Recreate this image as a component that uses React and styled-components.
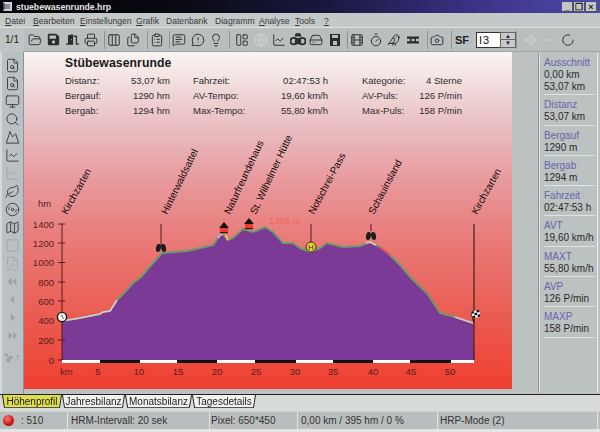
import React from "react";
import styled, { createGlobalStyle } from "styled-components";
import {
  FolderOpen, Printer, Columns3, Files, ClipboardList, MessageSquareText, MessageCircleWarning,
  Lightbulb, LayoutPanelLeft, Globe, ChartLine, HardDrive, Film, Timer, Bird, Camera,
  FileSearch, Monitor, Search, Mountain, Leaf, Disc3, Map, Square, FilePen, Sparkle, Minus, LoaderCircle,
} from "lucide-react";
import { FaSave, FaDoorOpen } from "react-icons/fa";

const GlobalStyle = createGlobalStyle`
  html, body { margin: 0; padding: 0; background: #bcc1c2; }
  * { box-sizing: border-box; }
`;

const Window = styled.div`
  width: 600px;
  height: 432px;
  display: flex;
  flex-direction: column;
  overflow: hidden;
  font-family: "Liberation Sans", Arial, sans-serif;
  background: #bcc1c2;
  color: #2a2a2a;
  filter: blur(0.3px);
`;

const TitleBar = styled.div`
  height: 13px;
  flex: none;
  display: flex;
  align-items: center;
  padding: 0 3px;
  background: linear-gradient(90deg, #000 0%, #0a0a14 30%, #1a1840 55%, #3c3488 80%, #4c4aa6 100%);
`;

const AppIcon = styled.div`
  width: 9px;
  height: 9px;
  margin-right: 4px;
  background: #8c8c9c;
  border: 2px solid #d0d0d8;
  border-left-color: #50506a;
`;

const TitleText = styled.span`
  color: #e8e8ea;
  font-size: 8.7px;
  font-weight: bold;
  flex: 1;
`;

const WinButton = styled.div`
  width: 11px;
  height: 10px;
  margin-left: 1px;
  background: #c2c6c4;
  color: #222;
  font-size: 9px;
  font-weight: bold;
  line-height: 10px;
  text-align: center;
  border-right: 1px solid #555;
  border-bottom: 1px solid #555;
`;

const MenuBar = styled.div`
  height: 15px;
  flex: none;
  display: flex;
  align-items: center;
  padding-top: 1px;
  background: #c3c8c8;
  border-bottom: 1px solid #dfe2e2;
  font-size: 8.6px;
  color: #3a3a3a;
`;

const MenuItem = styled.span`
  width: ${(p) => p.$w}px;
  flex: none;
  padding-left: 5px;
  white-space: nowrap;
  u { text-underline-offset: 1px; }
`;

const Toolbar = styled.div`
  height: 24px;
  flex: none;
  display: flex;
  align-items: center;
  background: #b9bebf;
  border-bottom: 1px solid #9ea3a4;
`;

const PageCell = styled.div`
  width: 24px;
  height: 24px;
  flex: none;
  font-size: 10px;
  line-height: 24px;
  text-align: center;
  color: #222;
  background: #bfc4c4;
`;

const ToolGroup = styled.div`
  width: ${(p) => p.$w}px;
  height: 18px;
  flex: none;
  display: flex;
  align-items: center;
  padding-left: ${(p) => p.$pad || 0}px;
  border-right: ${(p) => (p.$end ? "none" : "1px solid #8f9495")};
`;

const ToolButton = styled.div`
  width: 18.5px;
  height: 18px;
  flex: none;
  display: flex;
  align-items: center;
  justify-content: center;
  color: ${(p) => (p.$dim ? "#d2d6d6" : "#2c2c2c")};
`;

const SfLabel = styled.span`
  font-size: 11px;
  font-weight: bold;
  color: #222;
  width: 22px;
`;

const SpinInput = styled.div`
  width: 25px;
  height: 16px;
  background: #fff;
  border: 1px solid #333;
  border-right: none;
  font-size: 11px;
  line-height: 14px;
  padding-left: 2px;
  letter-spacing: 1px;
  color: #111;
`;

const SpinButtons = styled.div`
  width: 17px;
  height: 16px;
  display: flex;
  flex-direction: column;
  border: 1px solid #666;
`;

const SpinArrow = styled.div`
  flex: 1;
  display: flex;
  align-items: center;
  justify-content: center;
  background: #c6caca;
  font-size: 6px;
  color: #222;
  &:first-child { border-bottom: 1px solid #666; }
`;

const Main = styled.div`
  height: 342px;
  flex: none;
  display: flex;
`;

const SideBar = styled.div`
  width: 24px;
  flex: none;
  display: flex;
  flex-direction: column;
  align-items: center;
  padding: 4px 1px 0 0;
  background: #b9c1c4;
  border-left: 2px solid #d4d8d8;
  border-right: 1px solid #8e9496;
`;

const SideButton = styled.div`
  height: 18px;
  flex: none;
  display: flex;
  align-items: center;
  justify-content: center;
  color: ${(p) => (p.$dim ? "#9aa3a6" : "#333")};
  margin-top: ${(p) => p.$top || 0}px;
  font-size: 8px;
  font-weight: bold;
`;

const Canvas = styled.div`
  width: 488px;
  height: 337px;
  flex: none;
  display: flex;
  flex-direction: column;
  background: linear-gradient(180deg, #fbf6f4 0%, #f0d9d9 11%, #e9bcc0 23%, #e89a9e 38%, #e97a78 56%, #ea6259 74%, #ee3f30 100%);
`;

const Header = styled.div`
  height: 68px;
  flex: none;
  padding: 4px 0 0 41px;
`;

const TourTitle = styled.div`
  font-size: 12.2px;
  font-weight: bold;
  letter-spacing: 0.1px;
  line-height: 15px;
  color: #1a1a1a;
  margin-bottom: 1.5px;
`;

const StatGrid = styled.div`
  display: grid;
  grid-template-columns: 105px 158px 134px;
  font-size: 9.5px;
  line-height: 15px;
  color: #2c2c2c;
  white-space: nowrap;
`;

const Stat = styled.div`
  display: flex;
  justify-content: space-between;
  margin-left: ${(p) => p.$shift || 0}px;
`;

const Chart = styled.svg`
  display: block;
  flex: none;
  font-family: "Liberation Sans", Arial, sans-serif;
`;

const Gutter = styled.div`
  width: 27px;
  flex: none;
`;

const Panel = styled.div`
  width: 59px;
  height: 340px;
  flex: none;
  margin-top: 1px;
  padding: 0 2px 0 4px;
  border-left: 1px solid #dfe3e3;
  border-right: 1px solid #eceeee;
  box-shadow: -1px 0 0 #8f9495;
`;

const PanelItem = styled.div`
  padding: 4px 0 1.3px;
  border-bottom: 1px solid #dfe3e3;
  font-size: 10px;
  line-height: 12px;
  white-space: nowrap;
  color: #2a2a2a;
  span { display: block; color: #6666a8; }
`;

const TabStrip = styled.div`
  height: 17px;
  flex: none;
  display: flex;
  padding-left: 2px;
  background: #d7dad6;
  border-top: 1px solid #222;
`;

const Tab = styled.div`
  position: relative;
  width: ${(p) => p.$w}px;
  height: 14px;
  flex: none;
  font-size: 10px;
  line-height: 14px;
  text-align: center;
  color: #222;
  span { position: relative; }
  &::before {
    content: "";
    position: absolute;
    inset: 0;
    background: ${(p) => (p.$active ? "#dede4c" : "#f2f3f0")};
    border-left: 1px solid #222;
    border-right: 1px solid #222;
    border-bottom: 1px solid #555;
    transform-origin: top;
    transform: perspective(30px) rotateX(-9deg);
  }
`;

const StatusBar = styled.div`
  height: 18px;
  flex: none;
  display: flex;
  align-items: center;
  background: #babdbd;
  border-top: 1px solid #cfd2d2;
  font-size: 10px;
  color: #333;
  white-space: nowrap;
`;

const StatusPane = styled.div`
  width: ${(p) => p.$w}px;
  height: 100%;
  flex: none;
  display: flex;
  align-items: center;
  gap: 7px;
  padding-left: ${(p) => p.$pad || 2}px;
  border-right: 1px solid #e2e4e4;
`;

const Led = styled.div`
  width: 11px;
  height: 11px;
  border-radius: 50%;
  background: radial-gradient(circle at 40% 35%, #f08080, #d01818 55%, #801010);
`;

const BottomEdge = styled.div`
  flex: 1;
  background: #e2e5e2;
`;

const I = { size: 14, strokeWidth: 1.6 };
const S = { size: 15, strokeWidth: 1.4 };

const Shape = ({ children, size = 14 }) => (
  <svg width={size} height={size} viewBox="0 0 14 14" fill="currentColor">{children}</svg>
);

const menus = [
  ["D", "atei", 28], ["B", "earbeiten", 47], ["E", "instellungen", 56], ["G", "rafik", 30],
  ["", "Datenbank", 49], ["", "Diagramm", 44], ["A", "nalyse", 36], ["T", "ools", 29], ["?", "", 20],
];

const stats = [
  ["Distanz:", "53,07 km", "Fahrzeit:", "02:47:53 h", "Kategorie:", "4 Sterne"],
  ["Bergauf:", "1290 hm", "AV-Tempo:", "19,60 km/h", "AV-Puls:", "126 P/min"],
  ["Bergab:", "1294 hm", "Max-Tempo:", "55,80 km/h", "Max-Puls:", "158 P/min"],
];

const summary = [
  ["Distanz", "53,07 km"], ["Bergauf", "1290 m"], ["Bergab", "1294 m"], ["Fahrzeit", "02:47:53 h"],
  ["AVT", "19,60 km/h"], ["MAXT", "55,80 km/h"], ["AVP", "126 P/min"], ["MAXP", "158 P/min"],
];

const profile = [
  [62, 321], [80, 318], [100, 314], [103, 312], [110, 311], [117, 300], [125, 292], [133, 283], [141, 277],
  [153, 263], [162, 253], [187, 251], [213, 245], [220, 235], [225, 235], [228, 240], [233, 238], [243, 229],
  [253, 232], [265, 227], [273, 232], [283, 243], [293, 243], [300, 248], [310, 252], [320, 248], [327, 243],
  [343, 247], [360, 246], [370, 242], [380, 247], [390, 255], [400, 265], [413, 280], [427, 293], [440, 313],
  [455, 317], [473, 323],
];
const pts = (list) => list.map((p) => p.join(",")).join(" ");

const yTicks = [[1400, 224], [1200, 243], [1000, 262.5], [800, 282], [600, 301], [400, 320.5], [200, 340], [0, 360]];
const kmLabels = [[5, 98], [10, 139], [15, 178], [20, 217], [25, 256], [30, 295], [35, 333], [40, 373], [45, 411], [50, 450]];
const scale = [[62, 100, "#fff"], [100, 140, "#111"], [140, 177, "#fff"], [177, 217, "#111"], [217, 255, "#fff"], [255, 296, "#111"], [296, 333, "#fff"], [333, 373, "#111"], [373, 410, "#fff"], [410, 451, "#111"], [451, 474, "#fff"]];

const places = [
  ["Kirchzarten", 67, 215, 61], ["Hinterwaldsattel", 167, 215, 64], ["Naturfreundehaus", 230, 215, 65],
  ["St. Wilhelmer Hütte", 256, 215, 65], ["Notschrei-Pass", 314, 215, 62], ["Schauinsland", 374, 215, 62],
  ["Kirchzarten", 477, 215, 61],
];

const Binoculars = ({ x, y }) => (
  <g fill="#1c1c1c">
    <ellipse cx={x - 2.6} cy={y} rx="2.4" ry="4" transform={`rotate(12 ${x - 2.6} ${y})`} />
    <ellipse cx={x + 2.6} cy={y} rx="2.4" ry="4" transform={`rotate(-12 ${x + 2.6} ${y})`} />
  </g>
);

const Hut = ({ x, y }) => (
  <g>
    <path d={`M${x} ${y}l5 6h-10z`} fill="#1a1010" />
    <rect x={x - 4} y={y + 6} width="8" height="4" fill="#e8402c" />
    <rect x={x - 4} y={y + 10} width="8" height="1.2" fill="#401010" />
  </g>
);

const Profile = () => (
  <Chart width="488" height="269" viewBox="24 120 488 269">
    <polygon points={`62,360 ${pts(profile)} 474,360`} fill="#7b3a96" />
    <polyline points={pts(profile)} fill="none" stroke="#6f9a6a" strokeWidth="2" />
    <polyline points={pts(profile.slice(0, 6))} fill="none" stroke="#e4c8d0" strokeWidth="1.6" />
    <polyline points="218,238 220,235 222,234" fill="none" stroke="#c8a8e0" strokeWidth="2" />
    <polyline points="225,235 228,240" fill="none" stroke="#e8c850" strokeWidth="2" />
    <polyline points="366,243 370,242 376,245" fill="none" stroke="#e4c8d0" strokeWidth="1.6" />
    <polyline points="380,247 390,255" fill="none" stroke="#e0505c" strokeWidth="2" />
    <polyline points="455,317 473,323" fill="none" stroke="#e8c0d0" strokeWidth="1.6" />

    <line x1="62" y1="224" x2="62" y2="360" stroke="#5a1a1a" strokeWidth="1" />
    {yTicks.map(([v, y]) => (
      <g key={v}>
        <line x1="58" y1={y} x2="65" y2={y} stroke="#5a1a1a" strokeWidth="1" />
        <text x="54" y={y + 3.5} textAnchor="end" fontSize="9.5" fill="#5a1c1c">{v}</text>
      </g>
    ))}
    <text x="38" y="207" fontSize="9.5" fill="#5a1c1c">hm</text>
    <text x="60" y="375" fontSize="9.5" fill="#5a1c1c">km</text>
    {scale.map(([a, b, c]) => (
      <rect key={a} x={a} y="360" width={b - a} height="3" fill={c} />
    ))}
    {kmLabels.map(([v, x]) => (
      <text key={v} x={x} y="375" textAnchor="middle" fontSize="9.5" fill="#5a1c1c">{v}</text>
    ))}

    <line x1="161" y1="224" x2="161" y2="247" stroke="#4a2020" />
    <line x1="311" y1="224" x2="311" y2="243" stroke="#4a2020" />
    <line x1="371" y1="224" x2="371" y2="231" stroke="#4a2020" />
    <line x1="474" y1="224" x2="474" y2="360" stroke="#1a1010" />

    {places.map(([name, x, y, a], i) => (
      <text key={i} x={x} y={y} fontSize="10" fill="#140a0a" transform={`rotate(${-a} ${x} ${y})`}>{name}</text>
    ))}

    <Binoculars x={161} y={248} />
    <Binoculars x={371} y={236} />
    <Hut x={224} y={222} />
    <Hut x={249} y={218} />
    <text x="269" y="224" fontSize="9.5" fill="#ef6a58">1356 m</text>

    <circle cx="311" cy="247" r="5" fill="#e6d040" stroke="#3a3010" strokeWidth="1" />
    <text x="311" y="250" textAnchor="middle" fontSize="8" fill="#3a3010">H</text>

    <circle cx="62" cy="317" r="4.6" fill="#f4f4f4" stroke="#1a1a1a" strokeWidth="1.4" />
    <path d="M62 314.5v2.5l2 1.5" fill="none" stroke="#333" strokeWidth="0.8" />

    <g transform="rotate(-14 474 315)">
      <line x1="472" y1="312" x2="472" y2="322" stroke="#111" />
      <rect x="472" y="311" width="8" height="7" fill="#fff" />
      <path d="M472 311h2.7v2.3h-2.7zM477.3 311h2.7v2.3h-2.7zM474.7 313.3h2.7v2.3h-2.7zM472 315.7h2.7v2.3h-2.7zM477.3 315.7h2.7v2.3h-2.7z" fill="#111" />
    </g>
  </Chart>
);

export default function App() {
  return (
    <Window>
      <GlobalStyle />
      <TitleBar>
        <AppIcon />
        <TitleText>stuebewasenrunde.hrp</TitleText>
        <WinButton>_</WinButton>
        <WinButton>❐</WinButton>
        <WinButton>×</WinButton>
      </TitleBar>
      <MenuBar>
        {menus.map(([u, rest, w]) => (
          <MenuItem key={u + rest} $w={w}>{u && <u>{u}</u>}{rest}</MenuItem>
        ))}
      </MenuBar>
      <Toolbar>
        <PageCell>1/1</PageCell>
        <ToolGroup $w={81} $pad={2}>
          <ToolButton><FolderOpen {...I} /></ToolButton>
          <ToolButton><FaSave size={13} /></ToolButton>
          <ToolButton><FaDoorOpen size={13} /></ToolButton>
          <ToolButton><Printer {...I} /></ToolButton>
        </ToolGroup>
        <ToolGroup $w={43}>
          <ToolButton><Columns3 {...I} /></ToolButton>
          <ToolButton><Files {...I} /></ToolButton>
        </ToolGroup>
        <ToolGroup $w={22}>
          <ToolButton><ClipboardList {...I} /></ToolButton>
        </ToolGroup>
        <ToolGroup $w={60}>
          <ToolButton><MessageSquareText {...I} /></ToolButton>
          <ToolButton><MessageCircleWarning {...I} /></ToolButton>
          <ToolButton><Lightbulb {...I} /></ToolButton>
        </ToolGroup>
        <ToolGroup $w={118} $pad={3}>
          <ToolButton><LayoutPanelLeft {...I} /></ToolButton>
          <ToolButton $dim><Globe {...I} /></ToolButton>
          <ToolButton><ChartLine {...I} /></ToolButton>
          <ToolButton>
            <Shape size={16}>
              <path d="M5 1h4l1 3H4z" />
              <circle cx="3.2" cy="8" r="2.8" fill="none" stroke="currentColor" strokeWidth="1.6" />
              <circle cx="7" cy="8" r="2.8" />
              <circle cx="10.8" cy="8" r="2.8" fill="none" stroke="currentColor" strokeWidth="1.6" />
            </Shape>
          </ToolButton>
          <ToolButton><HardDrive {...I} /></ToolButton>
          <ToolButton>
            <Shape>
              <path d="M2 1h10v12H2z M4 2v3h6V2z M5 8v4h4V8z" fillRule="evenodd" />
            </Shape>
          </ToolButton>
        </ToolGroup>
        <ToolGroup $w={80}>
          <ToolButton><Film {...I} /></ToolButton>
          <ToolButton><Timer {...I} /></ToolButton>
          <ToolButton><Bird {...I} /></ToolButton>
          <ToolButton>
            <Shape>
              <path d="M1 3.5h12v2.2H1z M1 8.3h12v2.2H1z M4 5.7h1.5v2.6H4z M8.5 5.7H10v2.6H8.5z" />
            </Shape>
          </ToolButton>
        </ToolGroup>
        <ToolGroup $w={24}>
          <ToolButton><Camera {...I} /></ToolButton>
        </ToolGroup>
        <ToolGroup $w={65} $pad={3}>
          <SfLabel>SF</SfLabel>
          <SpinInput>I3</SpinInput>
          <SpinButtons>
            <SpinArrow>▲</SpinArrow>
            <SpinArrow>▼</SpinArrow>
          </SpinButtons>
        </ToolGroup>
        <ToolGroup $w={68} $pad={5} $end>
          <ToolButton $dim><Sparkle {...I} /></ToolButton>
          <ToolButton $dim><Minus {...I} /></ToolButton>
          <ToolButton><LoaderCircle {...I} /></ToolButton>
        </ToolGroup>
      </Toolbar>
      <Main>
        <SideBar>
          <SideButton><FileSearch {...S} /></SideButton>
          <SideButton><FileSearch {...S} /></SideButton>
          <SideButton><Monitor {...S} /></SideButton>
          <SideButton><Search {...S} /></SideButton>
          <SideButton><Mountain {...S} /></SideButton>
          <SideButton><ChartLine {...S} /></SideButton>
          <SideButton $dim><ChartLine {...S} /></SideButton>
          <SideButton><Leaf {...S} /></SideButton>
          <SideButton><Disc3 {...S} /></SideButton>
          <SideButton><Map {...S} /></SideButton>
          <SideButton $dim><Square {...S} /></SideButton>
          <SideButton $dim><FilePen {...S} /></SideButton>
          <SideButton $dim><Shape size={11}><path d="M6 2v10L1 7z M12 2v10L7 7z" /></Shape></SideButton>
          <SideButton $dim><Shape size={11}><path d="M9 2v10L4 7z" /></Shape></SideButton>
          <SideButton $dim><Shape size={11}><path d="M5 2v10l5-5z" /></Shape></SideButton>
          <SideButton $dim><Shape size={11}><path d="M2 2v10l5-5z M8 2v10l5-5z" /></Shape></SideButton>
          <SideButton $dim $top={4}>
            <Shape size={11}><path d="M1 2h4v4H1z M6 5h5v4H6z M3 8h5v5H3z" /></Shape>?
          </SideButton>
        </SideBar>
        <Canvas>
          <Header>
            <TourTitle>Stübewasenrunde</TourTitle>
            <StatGrid>
              {stats.map((row) => (
                <React.Fragment key={row[0]}>
                  <Stat><span>{row[0]}</span><span>{row[1]}</span></Stat>
                  <Stat $shift={23}><span>{row[2]}</span><span>{row[3]}</span></Stat>
                  <Stat $shift={34}><span>{row[4]}</span><span>{row[5]}</span></Stat>
                </React.Fragment>
              ))}
            </StatGrid>
          </Header>
          <Profile />
        </Canvas>
        <Gutter />
        <Panel>
          <PanelItem><span>Ausschnitt</span>0,00 km<br />53,07 km</PanelItem>
          {summary.map(([k, v]) => (
            <PanelItem key={k}><span>{k}</span>{v}</PanelItem>
          ))}
        </Panel>
      </Main>
      <TabStrip>
        <Tab $w={60} $active><span>Höhenprofil</span></Tab>
        <Tab $w={63}><span>Jahresbilanz</span></Tab>
        <Tab $w={67}><span>Monatsbilanz</span></Tab>
        <Tab $w={64}><span>Tagesdetails</span></Tab>
      </TabStrip>
      <StatusBar>
        <StatusPane $w={68} $pad={3}><Led />: 510</StatusPane>
        <StatusPane $w={142} $pad={3}>HRM-Intervall: 20 sek</StatusPane>
        <StatusPane $w={88} $pad={1}>Pixel: 650*450</StatusPane>
        <StatusPane $w={140} $pad={3}>0,00 km / 395 hm / 0 %</StatusPane>
        <StatusPane $w={160} $pad={2}>HRP-Mode (2)</StatusPane>
      </StatusBar>
      <BottomEdge />
    </Window>
  );
}
